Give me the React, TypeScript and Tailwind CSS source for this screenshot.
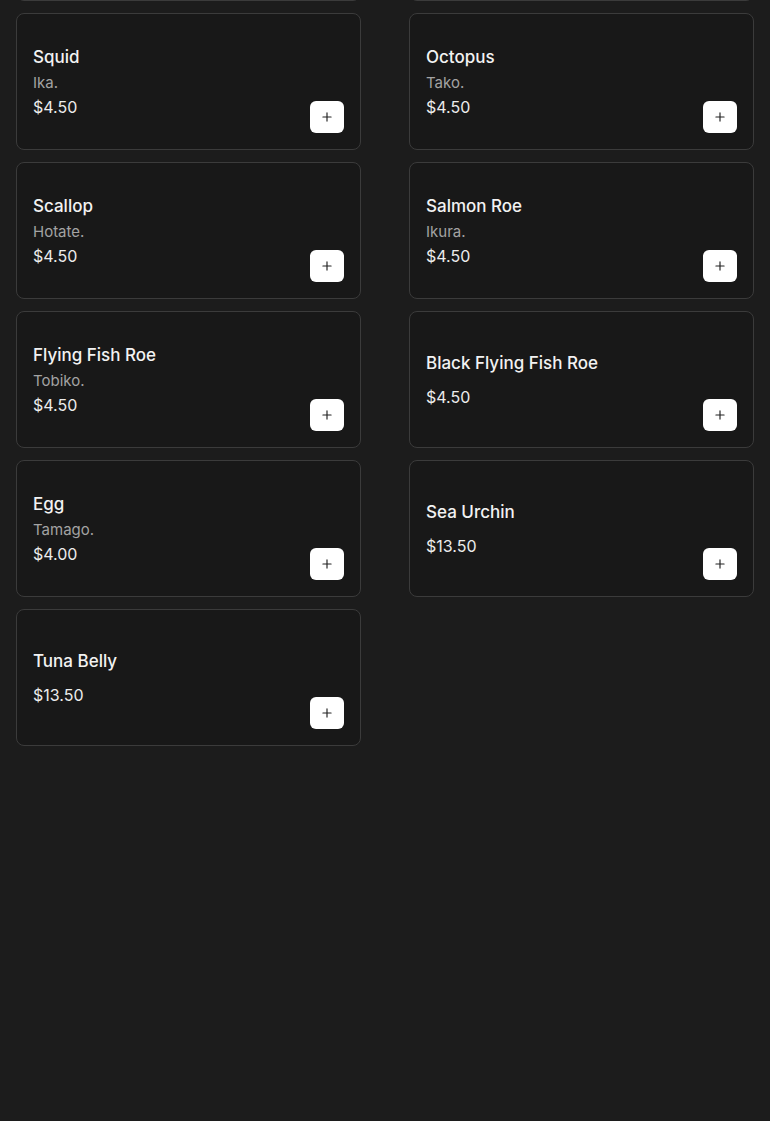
import React from "react";
import { Plus } from "lucide-react";

type Item = { name: string; sub?: string; price: string };

const items: Item[] = [
  { name: "Squid", sub: "Ika.", price: "$4.50" },
  { name: "Octopus", sub: "Tako.", price: "$4.50" },
  { name: "Scallop", sub: "Hotate.", price: "$4.50" },
  { name: "Salmon Roe", sub: "Ikura.", price: "$4.50" },
  { name: "Flying Fish Roe", sub: "Tobiko.", price: "$4.50" },
  { name: "Black Flying Fish Roe", price: "$4.50" },
  { name: "Egg", sub: "Tamago.", price: "$4.00" },
  { name: "Sea Urchin", price: "$13.50" },
  { name: "Tuna Belly", price: "$13.50" },
];

function Card({ item }: { item: Item }) {
  return (
    <div className="flex h-[137px] items-center justify-between rounded-lg border border-[#3b3b3b] bg-[#181818] px-4 pb-4">
      <div className={`flex flex-col ${item.sub ? "" : "gap-2"} pt-[14px]`}>
        <div className="text-[17px] font-medium leading-7 text-[#f2f2f2]">{item.name}</div>
        {item.sub && (
          <div className="text-[15px] leading-6 text-[#a3a3a3]">{item.sub}</div>
        )}
        <div className="text-[16px] leading-6 text-[#ececec]">{item.price}</div>
      </div>
      <button className="flex h-[32px] w-[34px] items-center justify-center self-end rounded-md bg-white">
        <Plus size={14} strokeWidth={2} color="#222" />
      </button>
    </div>
  );
}

export default function App() {
  return (
    <div
      className="min-h-screen overflow-hidden bg-[#1c1c1c]"
      style={{ fontFamily: "Inter, 'Open Sans', sans-serif" }}
    >
      <div className="-mt-[136px] grid grid-cols-2 gap-x-12 gap-y-3 px-4">
        <div className="h-[137px] rounded-lg border border-[#3b3b3b] bg-[#181818]" />
        <div className="h-[137px] rounded-lg border border-[#3b3b3b] bg-[#181818]" />
        {items.map((it) => (
          <Card key={it.name} item={it} />
        ))}
      </div>
    </div>
  );
}
